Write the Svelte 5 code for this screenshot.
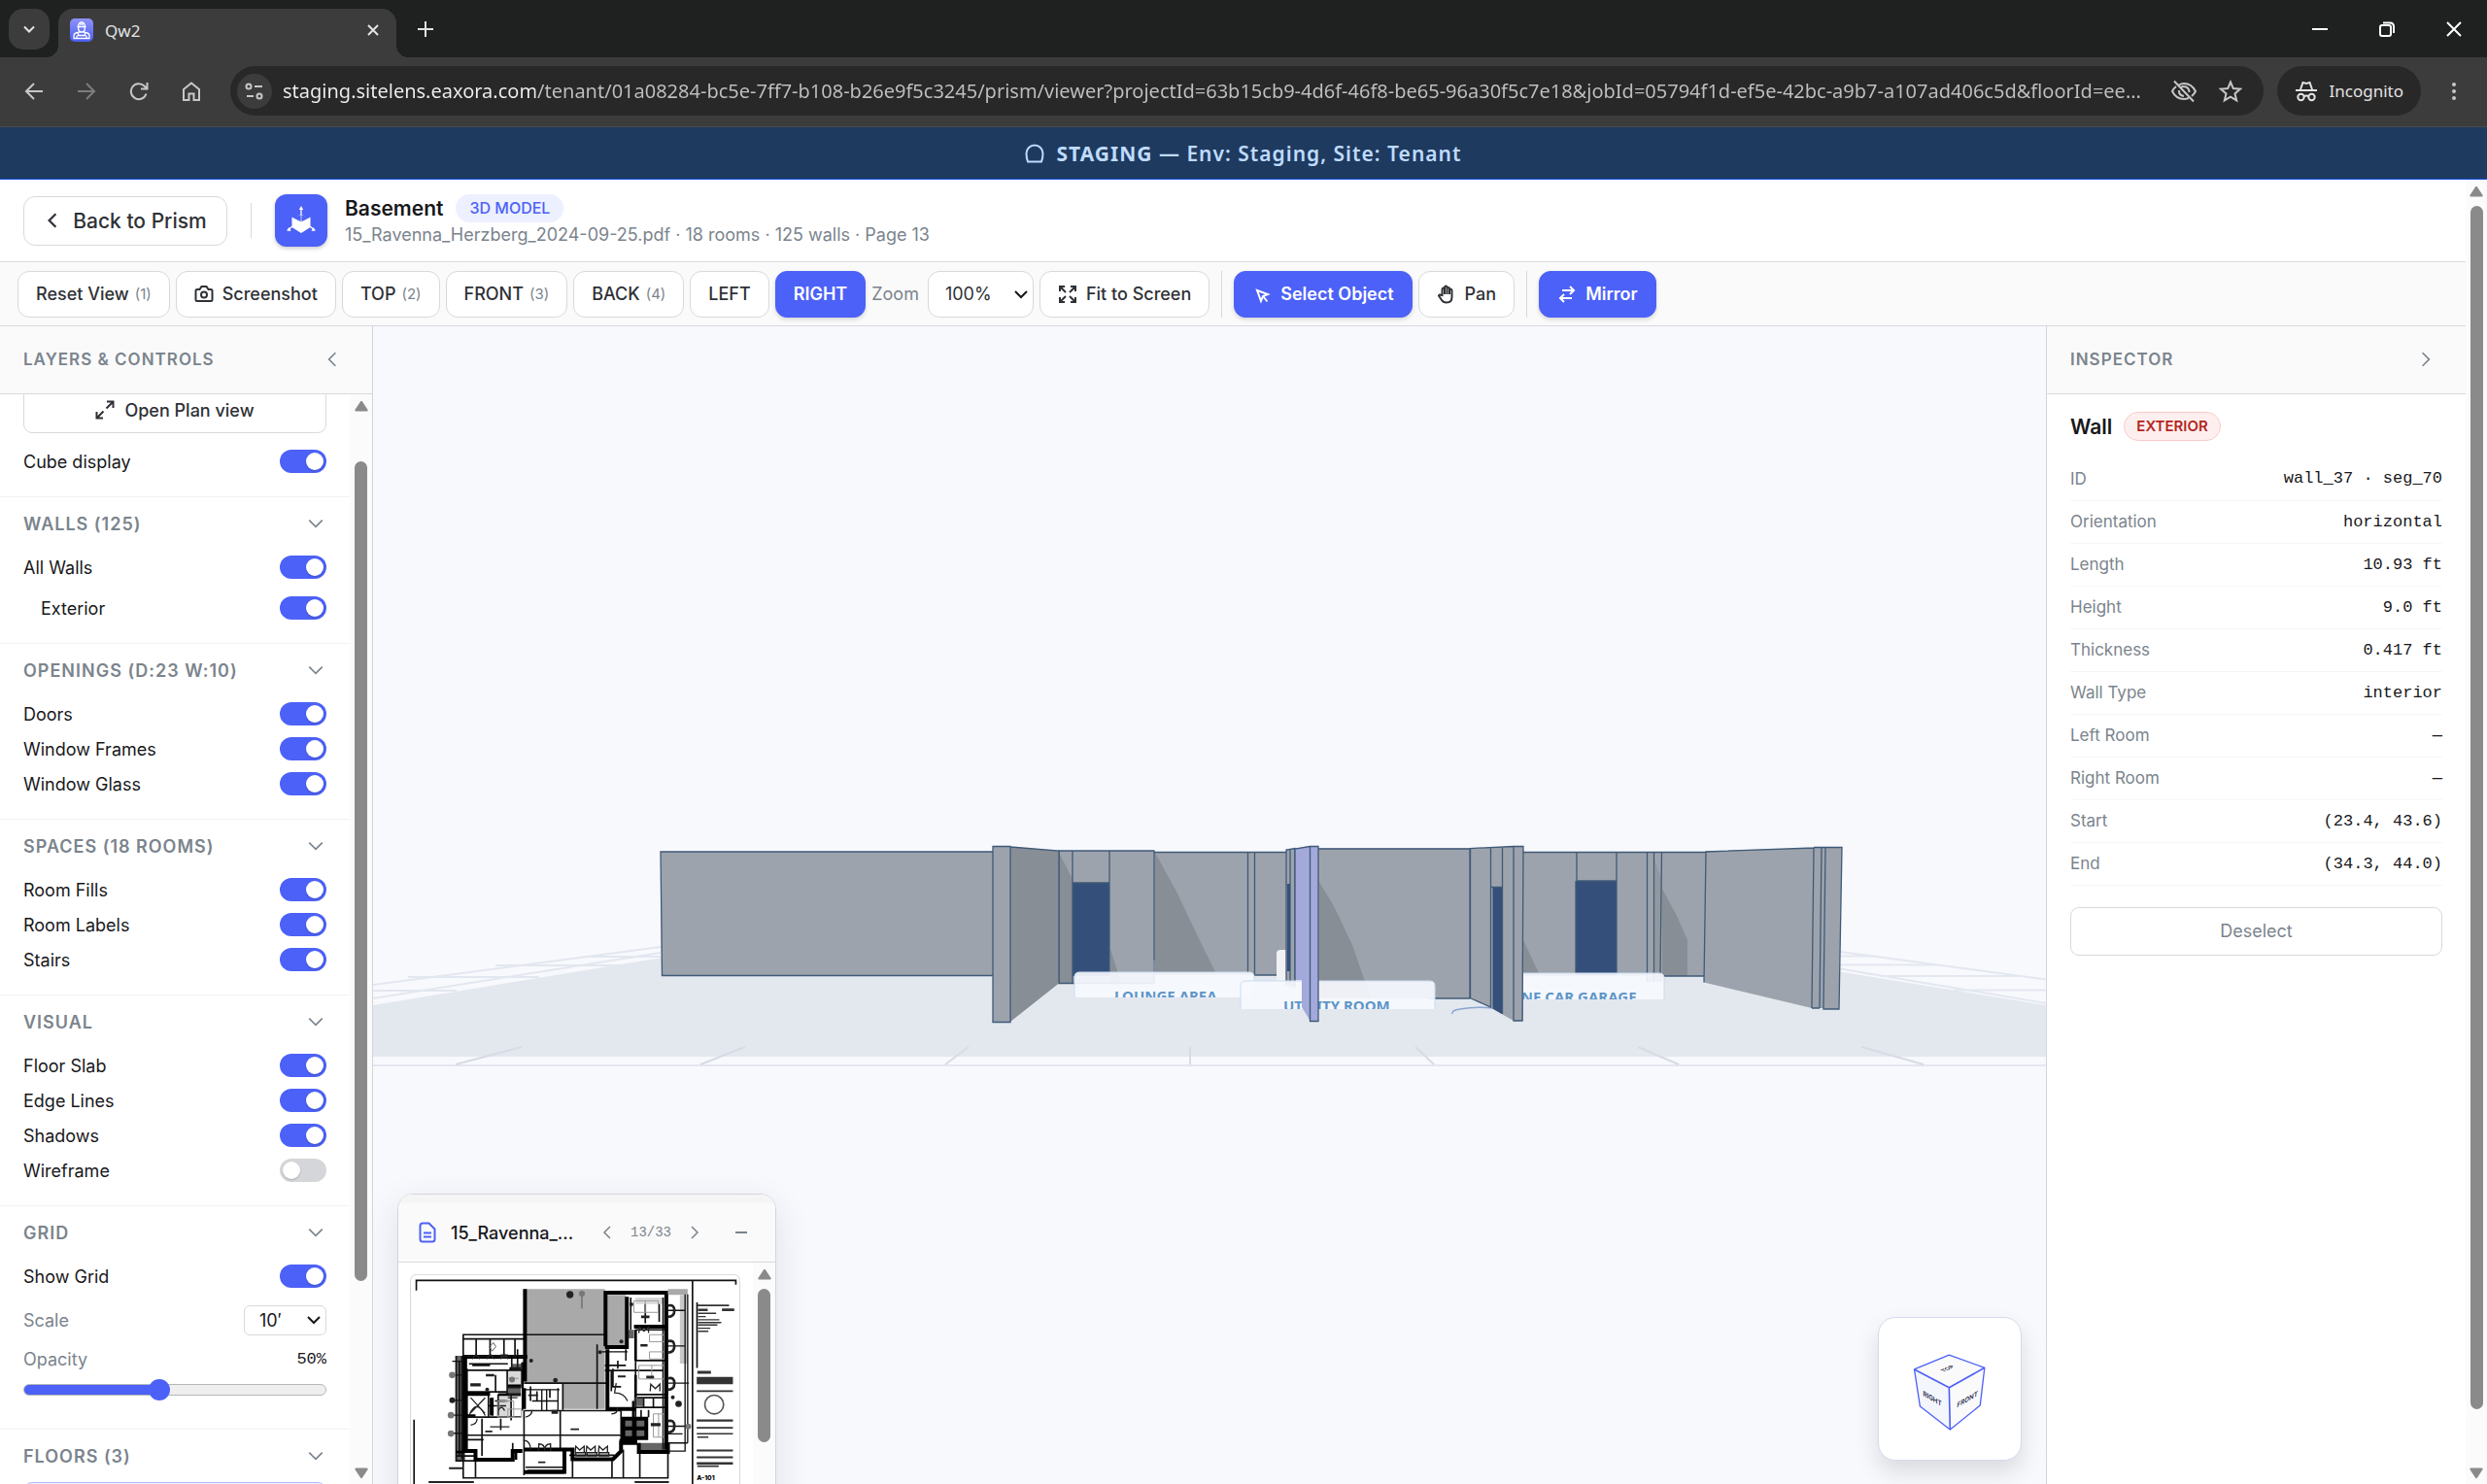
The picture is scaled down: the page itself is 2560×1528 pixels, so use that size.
<script>
	let sections = $state([
		{
			title: 'WALLS (125)',
			rows: [
				{ label: 'All Walls', on: true },
				{ label: 'Exterior', on: true, nested: true }
			]
		},
		{
			title: 'OPENINGS (D:23 W:10)',
			rows: [
				{ label: 'Doors', on: true },
				{ label: 'Window Frames', on: true },
				{ label: 'Window Glass', on: true }
			]
		},
		{
			title: 'SPACES (18 ROOMS)',
			rows: [
				{ label: 'Room Fills', on: true },
				{ label: 'Room Labels', on: true },
				{ label: 'Stairs', on: true }
			]
		},
		{
			title: 'VISUAL',
			rows: [
				{ label: 'Floor Slab', on: true },
				{ label: 'Edge Lines', on: true },
				{ label: 'Shadows', on: true },
				{ label: 'Wireframe', on: false }
			]
		}
	]);

	let cubeDisplay = $state(true);
	let showGrid = $state(true);
	let opacity = $state(50);
	let fill = $derived(((opacity - 10) / 90) * 100);
	let view = $state('RIGHT');
	let url = $state(
		'staging.sitelens.eaxora.com/tenant/01a08284-bc5e-7ff7-b108-b26e9f5c3245/prism/viewer?projectId=63b15cb9-4d6f-46f8-be65-96a30f5c7e18&jobId=05794f1d-ef5e-42bc-a9b7-a107ad406c5d&floorId=ee...'
	);

	const views = [
		{ name: 'TOP', key: '(2)' },
		{ name: 'FRONT', key: '(3)' },
		{ name: 'BACK', key: '(4)' },
		{ name: 'LEFT' },
		{ name: 'RIGHT' }
	];

	const details = [
		['ID', 'wall_37 · seg_70'],
		['Orientation', 'horizontal'],
		['Length', '10.93 ft'],
		['Height', '9.0 ft'],
		['Thickness', '0.417 ft'],
		['Wall Type', 'interior'],
		['Left Room', '—'],
		['Right Room', '—'],
		['Start', '(23.4, 43.6)'],
		['End', '(34.3, 44.0)']
	];
</script>

{#snippet chevron(dir)}
	<svg class="chevron {dir}" viewBox="0 0 16 16" width="18" height="18"><path d="M2 5l6 6 6-6" /></svg>
{/snippet}

{#snippet arrow(dir)}
	<svg class="arrow {dir}" viewBox="0 0 14 12" width="14" height="12"><path d="M6 1.5Q7 .2 8 1.5L13.6 10Q14 11.5 12.5 11.5H1.5Q0 11.5.4 10Z" /></svg>
{/snippet}

<div class="app">
	<header class="tabs">
		<button class="tab-search" aria-label="Search tabs">
			<svg viewBox="0 0 14 14" width="14" height="14"><path d="M2 4.500l5 5 5-5" /></svg>
		</button>
		<div class="tab">
			<svg class="favicon" viewBox="0 0 24 24" width="24" height="24">
				<defs>
					<linearGradient id="fav" x1="0" y1="0" x2="0" y2="1">
						<stop offset="0" stop-color="#8f92f8" />
						<stop offset="1" stop-color="#4b5ff0" />
					</linearGradient>
				</defs>
				<rect width="24" height="24" rx="5" fill="url(#fav)" />
				<path d="M7.500 8.500h9M8.500 8a3.500 4 0 0 1 7 0M11 4v3M13 4v3M8.700 9v1.500a3.300 3.300 0 0 0 6.600 0V9M4 20.500v-2.500q0-3 4-3.500l1.500-.5h5l1.500.5q4 .5 4 3.500v2.500zM8.500 14.500v3h7v-3M7 20.500v-3M17 20.500v-3" fill="none" stroke="#fff" stroke-width="1.300" />
			</svg>
			<span class="tab-title">Qw2</span>
			<button class="bare" aria-label="Close tab">
				<svg viewBox="0 0 14 14" width="14" height="14"><path d="M2 2l10 10M12 2L2 12" /></svg>
			</button>
		</div>
		<button class="bare new-tab" aria-label="New tab">
			<svg viewBox="0 0 16 16" width="16" height="16"><path d="M8 0v16M0 8h16" /></svg>
		</button>
		<div class="window-buttons">
			<button class="bare" aria-label="Minimize"><svg viewBox="0 0 16 16" width="16" height="16"><path d="M0 8h16" /></svg></button>
			<button class="bare" aria-label="Restore">
				<svg viewBox="0 0 16 16" width="16" height="16"><rect x="1" y="4" width="11" height="11" rx="2" /><path d="M4 1.500h7q4 0 4 4V12" /></svg>
			</button>
			<button class="bare" aria-label="Close"><svg viewBox="0 0 16 16" width="16" height="16"><path d="M1 1l14 14M15 1L1 15" /></svg></button>
		</div>
	</header>

	<nav class="browser-bar">
		<div class="nav-icons">
			<button class="bare" aria-label="Back"><svg viewBox="0 0 20 20" width="20" height="20"><path d="M19 10H2M10 2l-8 8 8 8" /></svg></button>
			<button class="bare off" aria-label="Forward"><svg viewBox="0 0 20 20" width="20" height="20"><path d="M1 10h17M10 2l8 8-8 8" /></svg></button>
			<button class="bare" aria-label="Reload"><svg viewBox="0 0 20 20" width="20" height="20"><path d="M17.500 12.500A8 8 0 1 1 15.500 4.500L18 7M18.500 1v6.500H12" /></svg></button>
			<button class="bare" aria-label="Home"><svg viewBox="0 0 20 20" width="20" height="20"><path d="M2 8l8-6.500L18 8v11h-5.500v-6.500h-5V19H2z" /></svg></button>
		</div>
		<div class="url">
			<button class="site-info" aria-label="Site information">
				<svg viewBox="0 0 20 20" width="20" height="20"><circle cx="4" cy="5" r="2.500" /><path d="M10 5h8M2 15h7" /><circle cx="15" cy="15" r="2.500" /></svg>
			</button>
			<input type="text" aria-label="Address" bind:value={url} />
			<button class="bare" aria-label="Third-party cookies blocked">
				<svg viewBox="0 0 28 24" width="28" height="24"><path d="M9 5.500Q11.300 4 14 4q8 0 12 8-1.500 3-4 5M6 7Q3.500 9 2 12q4 8 12 8 2.500 0 5-1M11 8q2-1.500 5-.5 3.500 1.500 3.500 5.500M9 11q-.5 5 5 6M4 1.500l20 21" /></svg>
			</button>
			<button class="bare" aria-label="Bookmark">
				<svg viewBox="0 0 24 24" width="24" height="24"><path d="M12 2.500l2.800 6.600 7.200.6-5.500 4.700 1.700 7-6.200-3.700-6.200 3.700 1.700-7L2 9.700l7.200-.6z" /></svg>
			</button>
		</div>
		<button class="incognito">
			<svg viewBox="0 0 24 22" width="24" height="22"><path d="M6 9l2.500-7 3.500 1 3.500-1L18 9M1 10h22" /><circle cx="6.500" cy="17" r="3.200" /><circle cx="17.500" cy="17" r="3.200" /><path d="M9.700 16q2.300-1 4.600 0" /></svg>
			Incognito
		</button>
		<button class="bare menu" aria-label="Menu"><svg viewBox="0 0 6 20" width="6" height="20"><circle cx="3" cy="3" r="2" /><circle cx="3" cy="10" r="2" /><circle cx="3" cy="17" r="2" /></svg></button>
	</nav>

	<div class="banner">
		<svg viewBox="0 0 20 20" width="20" height="20"><path d="M3 18.500Q1.500 14.500 1.500 10a8.500 8.500 0 0 1 17 0q0 4.500-1.500 8.500z" /></svg>
		<span><b>STAGING</b> — Env: Staging, Site: Tenant</span>
	</div>

	<div class="page">
		<main class="viewer">
			<div class="title-bar">
				<button class="back">{@render chevron('left')}Back to Prism</button>
				<span class="rule"></span>
				<div class="logo">
					<svg viewBox="0 0 30 30" width="30" height="30">
						<path d="M5.500 11.500L15 16.500l9.500-5V22L15 28 5.500 22z" fill="#fff" />
						<path d="M15 2v16M15 9l-9 6M15 9l9 6M6 21l-4 3.500M24 21l4 3.500" fill="none" stroke="#fff" stroke-width="1.300" />
						<path d="M12.800 4L15 0l2.200 4zM0 25.500l4.500.5-2-4zM30 25.500l-4.500.5 2-4z" fill="#fff" />
						<path d="M7 12.500l7.500-3.500v6.500zM23 12.500L15.500 9v6.500z" fill="#4c61f7" />
					</svg>
				</div>
				<div class="heading">
					<div class="heading-top"><h1>Basement</h1><span class="badge">3D MODEL</span></div>
					<p>15_Ravenna_Herzberg_2024-09-25.pdf · 18 rooms · 125 walls · Page 13</p>
				</div>
			</div>

			<div class="toolbar">
				<button class="tool">Reset View <small>(1)</small></button>
				<button class="tool">
					<svg viewBox="0 0 20 20" width="20" height="20"><path d="M1.500 6.500q0-1.500 1.500-1.500h2.500L7.500 2h5l2 3H17q1.500 0 1.500 1.500v9q0 1.500-1.500 1.500H3q-1.500 0-1.500-1.500z" /><circle cx="10" cy="10.500" r="3" /></svg>
					Screenshot
				</button>
				{#each views as v}
					<button class="tool" class:active={view === v.name} onclick={() => (view = v.name)}>
						{v.name}{#if v.key}<small>{v.key}</small>{/if}
					</button>
				{/each}
				<label class="zoom-label" for="zoom">Zoom</label>
				<div class="select zoom">
					<select id="zoom"><option>100%</option></select>
					{@render chevron('down')}
				</div>
				<button class="tool">
					<svg viewBox="0 0 20 20" width="20" height="20"><path d="M2 7V2h5M2 2l6 6M18 7V2h-5M18 2l-6 6M2 13v5h5M2 18l6-6M18 13v5h-5M18 18l-6-6" /></svg>
					Fit to Screen
				</button>
				<span class="rule"></span>
				<button class="tool active">
					<svg viewBox="0 0 20 20" width="20" height="20"><path d="M5 6l11 4-5 2-2 5zM11.500 12.500l4 5" /></svg>
					Select Object
				</button>
				<button class="tool">
					<svg viewBox="0 0 20 20" width="20" height="20"><path d="M5.500 11V5q0-1.500 1.200-1.500T8 5V3q0-1.500 1.200-1.500T10.500 3v1.500q0-1.500 1.300-1.500T13 4.500V6q0-1.300 1.200-1.300T15.500 6v7q0 5.500-5.500 5.500-3.500 0-5-2.500l-3-4.500q.8-1.500 2-.8zM8 5v5M10.500 4v6M13 5v5" /></svg>
					Pan
				</button>
				<span class="rule"></span>
				<button class="tool active">
					<svg viewBox="0 0 20 20" width="20" height="20"><path d="M5 6h12M13 2l4 4-4 4M15 14H3M7 10l-4 4 4 4" /></svg>
					Mirror
				</button>
			</div>

			<div class="workspace">
				<aside class="layers">
					<div class="panel-head">
						<h2>LAYERS &amp; CONTROLS</h2>
						<button class="bare" aria-label="Collapse layers">{@render chevron('left')}</button>
					</div>
					<div class="scroll-area">
						<div class="scroll-content">
							<div class="cube-section">
								<button class="plan-btn">
									<svg viewBox="0 0 20 20" width="20" height="20"><path d="M12 1.500h6.500V8M18 2l-6.500 6.500M8 18.500H1.500V12M2 18l6.500-6.500" /></svg>
									Open Plan view
								</button>
								<label class="row">Cube display<input type="checkbox" class="toggle" bind:checked={cubeDisplay} /></label>
							</div>
							{#each sections as section}
								<section>
									<button class="section-head">{section.title}{@render chevron('down')}</button>
									{#each section.rows as row}
										<label class="row" class:nested={row.nested}>
											{row.label}<input type="checkbox" class="toggle" bind:checked={row.on} />
										</label>
									{/each}
								</section>
							{/each}
							<section>
								<button class="section-head">GRID{@render chevron('down')}</button>
								<label class="row">Show Grid<input type="checkbox" class="toggle" bind:checked={showGrid} /></label>
								<div class="row muted scale-row">
									<label for="scale">Scale</label>
									<div class="select scale">
										<select id="scale"><option>10′</option></select>
										{@render chevron('down')}
									</div>
								</div>
								<div class="row muted"><label for="opacity">Opacity</label><output>{opacity}%</output></div>
								<input id="opacity" type="range" min="10" max="100" bind:value={opacity} style="--fill: {fill}%" />
							</section>
							<section>
								<button class="section-head">FLOORS (3){@render chevron('down')}</button>
								<button class="floor-btn" aria-label="Floor"></button>
							</section>
						</div>
						<div class="scrollbar">{@render arrow('up')}<span class="thumb side-thumb"></span>{@render arrow('down')}</div>
					</div>
				</aside>

				<div class="canvas">
					<svg class="scene" viewBox="384 336 1722 1192" preserveAspectRatio="xMidYMid slice">
						<defs>
							<clipPath id="clip-lounge"><rect x="1106" y="1000" width="185" height="27" /></clipPath>
							<clipPath id="clip-utility"><rect x="1277" y="1009" width="201" height="30" /></clipPath>
							<clipPath id="clip-garage"><rect x="1529" y="1001" width="184" height="28" /></clipPath>
						</defs>
						<path fill="#e3e8ef" d="M384 1035L660 989.500L760 974H1800L1894 1000.500L2106 1035V1088H384z" />
						<g fill="none" stroke="#e3e7ef" stroke-width="2">
							<path d="M384 1097H2106" />
							<path d="M384 1028L680 981M384 1014L680 975M384 1020H470M420 1006H555M510 994H650M600 985H680" />
							<path d="M1894 980L2106 1008.500M1894 997.500L2106 1033M1894 984.500H1930M1894 993.500H1995M1935 1005H2078M2012 1019.500H2106" />
							<path stroke="#d6dbe5" d="M469 1096L537 1078M721 1096L767 1078M973 1096L997 1078M1225 1096V1078M1476 1096L1457 1078M1728 1096L1686 1078M1980 1096L1916 1078" />
						</g>
						<!-- back walls -->
						<g fill="#9da3ac">
							<path d="M680 877H1022V1004.500H681z" />
							<path d="M1090 876H1188V1012.500H1090z" />
							<path d="M1188 877H1324V1004H1188z" />
							<path d="M1357 873.500H1514V1028H1357z" />
							<path d="M1568 877H1756V1005H1568z" />
							<path d="M1695 877H1711V1011H1695z" />
							<path d="M1756 876.500L1867 873L1865 1038L1754 1011.500z" />
							<path d="M1867 873H1879L1877 1038H1865z" />
							<path d="M1879 872.500H1896L1893 1039H1877z" />
						</g>
						<g fill="#888e96">
							<path d="M1090 878L1104 905V1012H1090z" />
							<path d="M1143 977L1154 1012H1143z" />
							<path d="M1189 878L1211 918L1231 960L1252 1003H1189z" />
							<path d="M1358 908L1373 933L1392 973L1411 1028H1358z" />
							<path d="M1568 968L1585 1004H1568z" />
							<path d="M1711 915L1726 943L1737 968V1005H1711z" />
							<path d="M1703 885L1710 905V1010H1703z" fill="#92989f" />
						</g>
						<g fill="#34507a">
							<path d="M1104 909H1142V1005H1104zM1622 907H1664V1004H1622z" />
						</g>
						<path d="M1314 1012V982q0-4 4-4h6v34z" fill="#f0f1f3" />
						<path d="M1187 988q2 0 2 4v10h-2z" fill="#f0f1f3" />
						<path d="M1324 875L1333 873.500V1018L1324 1014z" fill="#9da3ac" />
						<g class="edges">
							<path d="M1022 877H680L681.500 1004.500H1022" />
							<path d="M1090 876H1188V1012.500H1090zM1104 876V1012M1142 876V909H1104M1142 909V1003" />
							<path d="M1188 877.500H1324M1284.500 877V1003M1291.500 877V1004H1314" />
							<path d="M1324 1014V875L1333 873.500V1016M1328 875V1012" />
							<path d="M1357 874H1513V1028H1470" />
							<path d="M1568 877.500H1756M1623 877.500V907H1664V877.500M1622 907V1002M1664 907V1002M1695.500 877V1011M1702.500 877V1011M1710.500 877L1709 1005H1754" />
							<path d="M1754 1011.500L1756 877L1867 873L1865 1038M1875 873L1873 1038M1879 873L1877 1039H1893L1896 872.500H1867M1865 1038H1873" />
						</g>
						<path d="M1325 910h3v90h-3z" fill="#34507a" />
						<!-- room labels, cut by the floor -->
						<g fill="#f6f9fe" fill-opacity="0.920" stroke="#cbdcf0" stroke-width="1">
							<path d="M1106 1027V1006q0-5 5-5h175q5 0 5 5v21" />
							<path d="M1529 1029V1007q0-5 5-5h174q5 0 5 5v22" />
							<path d="M1277 1039V1015q0-5 5-5h190q5 0 5 5v24" />
						</g>
						<g class="room">
							<text x="1147" y="1031" clip-path="url(#clip-lounge)">LOUNGE AREA</text>
							<text x="1554" y="1032" clip-path="url(#clip-garage)">ONE CAR GARAGE</text>
							<text x="1321" y="1041" clip-path="url(#clip-utility)">UTILITY ROOM</text>
						</g>
						<path d="M1495 1044q-1-4 8-5 16-3 34-1" fill="none" stroke="#8ba5d0" stroke-width="1.500" />
						<!-- front walls -->
						<path d="M1040 872L1090 876V1012.500L1040 1052z" fill="#888e96" />
						<path d="M1022 871H1040V1052.500H1022z" fill="#9da3ac" />
						<path d="M1514 873.500L1568 871V1051H1558L1534 1037.500L1514 1028z" fill="#9da3ac" />
						<path d="M1536.500 914H1546V1044L1536.500 1038.500z" fill="#34507a" />
						<path d="M1333 873.500L1348.500 872V1051L1340 1037V1009H1333z" fill="#a3a9da" />
						<path d="M1348.500 871.500H1357V1051.500H1348.500z" fill="#a3a9da" />
						<g class="edges">
							<path d="M1022 871.500H1040V1052.500H1022zM1040 872L1090 876V1012.500" />
							<path d="M1333 1009V874L1348.500 871.500H1357V1051.500H1348.500V871.500" />
							<path d="M1513.500 1028V873.500L1558 871.500H1568L1567 1051H1558V871.500M1534.500 873V1037L1514 1028M1546.500 873V1044M1534.500 913.500H1546.500" />
						</g>
					</svg>

					<div class="plan-card">
						<div class="plan-head">
							<svg class="doc" viewBox="0 0 18 22" width="18" height="22"><path d="M4 1.500h6.500L16.500 7.500V18q0 2.500-2.500 2.500H4Q1.500 20.500 1.500 18V4Q1.500 1.500 4 1.500zM5 11.500h8M5 15.500h8" /></svg>
							<strong>15_Ravenna_...</strong>
							<button class="bare" aria-label="Previous page">{@render chevron('left')}</button>
							<span class="count">13/33</span>
							<button class="bare" aria-label="Next page">{@render chevron('right')}</button>
							<button class="bare minimise" aria-label="Minimise"><svg viewBox="0 0 12 12" width="12" height="12"><path d="M0 6h12" /></svg></button>
						</div>
						<div class="plan-body">
							<svg class="sheet" viewBox="98 308 1020 760" width="340" height="253">
								<rect x="99" y="309" width="1018" height="900" rx="18" fill="#fff" stroke="#d4d6da" stroke-width="3" />
								<g fill="#a9a9a9">
									<path d="M450 354H700V725H570V645H450zM700 372H765V535H700zM895 354H956V372H895z" />
									<path d="M932 372h22v212h-22zM240 560h16v325h-16z" fill="#c9c9c9" />
									<path d="M240 560h28v325h-28zM803 830h90v28h-90zM760 755h64v60h-64z" fill="#666" />
									<path d="M370 680h40v70h-40zM400 605h48v50h-48zM795 380h85v20h-85z" fill="#d9d9d9" />
								</g>
								<g fill="none" stroke="#111" stroke-width="5">
									<path d="M117 358V327H1105V340M971 327V960M985 395V598M110 758V960" />
									<path d="M260 495H700M262 508H450M570 645V728M676 525V725M450 645H708M302 508V560M345 508V560M388 508V560M422 508V560" />
									<path d="M262 495V938H895V858M240 560V888M262 560H460M262 605H450M262 672H400M398 605V680M445 580V730M262 678V745M340 678V750M262 750H440M370 680V745M410 680V760" />
									<path d="M300 858V938M415 830V880M450 730V930M320 755V870M562 730V850M262 806H750M450 730H750M750 730V850M262 820H325M600 880V938M722 880V938M757 850V938M808 860V938" />
									<path d="M700 606H890M795 480V680M795 480H890M795 575H890M795 680H890M710 575V720M765 540V575M725 600V656H750M720 606V670M780 380V480M825 400V460M868 400V455M795 720H890M795 690V830" />
									<path d="M948 370V855M956 370V830M895 420H948M895 530H950M895 645H960M895 778H960M890 830H956M895 855H950M895 802H940" stroke-width="4" />
									<path d="M505 730V665M520 665V730M475 700H555M555 660V730M450 665H560M690 548H770M228 577H262M228 620H262M228 698H262M228 744H262M228 800H262" stroke-width="4" />
									<path d="M250 575V870M258 560V880M274 600V850M280 585H400M290 590H345M412 560V605M430 540V600M240 870H300M240 885H415M455 905H570M460 915H575M590 868H730M700 590H765M740 575V600M880 380V850M886 690H800M820 690V720M850 690V720M362 620V672M378 755V790M352 690V745M360 700H400M340 715H372M470 655V700M490 670V700M530 665V690M812 728V750M835 728V750" />
								</g>
								<g fill="none" stroke="#000" stroke-width="12">
									<path d="M453 354V640M702 360V530M698 365H895M890 370V850M700 533H768V378M268 565V850M262 855H300V882H415V855H445" />
									<path d="M262 678H345M350 690V745M400 655H440M450 660V725M450 850H600V880H725L750 855V830H800M895 830V858H805V830M575 855V925M450 920H575M790 470H885M708 540V725H795M757 755H828V815H757zM757 785H828M792 755V815" />
									<path d="M445 582V660M262 565H460M405 600H440M370 680H440M262 745H300M425 850V882M795 480V575M795 620V690M788 700V830M745 822H800M240 858H262" stroke-width="8" />
								</g>
								<g fill="none" stroke="#222" stroke-width="4">
									<path d="M280 745q22-55 50 0M285 690l44 48M330 690l-46 48M495 855l1-22q18 0 18 20 0-20 18-20v22M608 860l2-20 12 12 14-12v20M642 860l2-20 12 12 14-12v20M680 860l2-20 12 12 14-12v20M840 670l2-22 14 14 14-14v22M805 490l2-18 14 12 14-12v18" />
									<path d="M290 570l12-14 12 14M334 570l12-14 12 14M376 570l12-14 12 14M735 645l-5 30q30 0 40 25M740 720q0 20-20 20M455 750q20-5 20-22M470 850q0-28-22-28M285 775q20-4 20-20" />
									<path d="M610 870h30v-10h-30zM645 870h30v-10h-30zM682 870h30v-10h-30zM370 730q10-20 20 0M400 690h30M372 700h20M375 715h20" />
									<path d="M895 405q20-5 20 15t-20 20M895 515q20-5 20 15t-20 20M895 630q20-5 20 15t-20 20M895 762q20-5 20 15t-20 20" stroke-width="8" />
								</g>
								<g fill="none" stroke="#9a9a9a" stroke-width="3">
									<path d="M790 390h75v36h-75zM825 390v36M838 495h45v22h-45zM838 548h45v22h-45zM805 590h78v42h-78zM845 590v42M368 700h50v50h-50zM400 725h42v26h-42zM850 740h32v72h-32zM866 740v72M400 630h34" />
									<path d="M355 520l8 12-12 14-8-14zM620 366h18M629 360v54" stroke="#555" />
								</g>
								<g fill="#222">
									<circle cx="592" cy="371" r="11" /><circle cx="228" cy="698" r="9" /><circle cx="928" cy="709" r="10" />
									<circle cx="472" cy="575" r="6" /><circle cx="547" cy="636" r="7" /><circle cx="336" cy="665" r="6" /><circle cx="685" cy="549" r="6" /><circle cx="782" cy="401" r="6" /><circle cx="751" cy="516" r="6" /><circle cx="910" cy="689" r="6" />
									<path d="M332 617h26v7h-26zM284 645h32v10h-32zM463 680h30v5h-30zM494 887h22v5h-22zM594 785h26v5h-26zM812 436h26v8h-26zM810 524h22v8h-22zM828 622h24v8h-24zM740 621h24v6h-24zM842 768h30v10h-30zM345 778h60v4h-60zM330 792h22v5h-22zM535 728h20v12h-20zM218 905h44v6h-44zM155 948h140v6H155zM792 948h106v6H792z" />
									<path d="M400 655h40v30h-40zM378 555h22v14h-22zM410 585h36v20h-36zM790 690h30v26h-30zM770 480h20v26h-20z" opacity=".7" />
								</g>
								<g fill="#777"><circle cx="228" cy="620" r="10" /><circle cx="224" cy="744" r="10" /><circle cx="224" cy="801" r="10" /><circle cx="629" cy="368" r="9" /><circle cx="413" cy="634" r="9" /><circle cx="958" cy="779" r="9" /></g>
								<g fill="#333">
									<path d="M986 402h98v5h-98zM988 415h30v7h-30zM1062 414h38v8h-38zM988 427h56v4h-56zM988 437h24v4h-24zM988 447h66v4h-66zM988 455h72v5h-72zM988 463h60v4h-60zM988 473h38v4h-38zM988 482h32v5h-32z" />
									<path d="M986 607h42v9h-42zM984 626h112v22h-112zM984 667h112v5h-112zM984 757h112v7h-112zM984 780h112v6h-112zM984 799h112v5h-112zM984 850h112v6h-112zM984 871h112v6h-112zM984 889h112v8h-112zM986 899h66v5h-66zM986 810h34v4h-34z" />
								</g>
								<circle cx="1038" cy="711" r="29" fill="#fff" stroke="#555" stroke-width="5" />
								<text class="sheet-no" x="984" y="944">A-101</text>
							</svg>
							<div class="scrollbar">{@render arrow('up')}<span class="thumb plan-thumb"></span>{@render arrow('down')}</div>
						</div>
					</div>

					<button class="cube" aria-label="View cube">
						<svg viewBox="98 79 444 444" width="146" height="146">
							<path d="M209 240L318 297L321 429L227 356z" fill="#f4f6fd" />
							<path d="M318 297L429 235L415 353L321 429z" fill="#fafafb" />
							<path d="M209 240L318 195L429 235L318 297z" fill="#fafafb" />
							<g fill="none" stroke="#4c61f7" stroke-width="4" stroke-linejoin="round">
								<path d="M209 240L318 195L429 235L415 353L321 429L227 356z" />
								<path d="M209 240L318 297L429 235M318 297L321 429" stroke-width="5" />
							</g>
							<g class="faces">
								<text transform="matrix(.86 .5 0 1 236 322)">RIGHT</text>
								<text transform="matrix(.86 -.5 -.1 1 342 360)">FRONT</text>
								<text transform="matrix(.8 -.35 .7 .4 300 249)">TOP</text>
							</g>
						</svg>
					</button>
				</div>

				<aside class="inspector">
					<div class="panel-head">
						<h2>INSPECTOR</h2>
						<button class="bare" aria-label="Collapse inspector">{@render chevron('right')}</button>
					</div>
					<div class="inspect-body">
						<div class="inspect-title"><h3>Wall</h3><span class="type">EXTERIOR</span></div>
						<table>
							<tbody>
								{#each details as [name, value]}
									<tr><th scope="row">{name}</th><td>{value}</td></tr>
								{/each}
							</tbody>
						</table>
						<button class="deselect">Deselect</button>
					</div>
				</aside>
			</div>
		</main>
		<div class="scrollbar page-scroll">{@render arrow('up')}<span class="thumb page-thumb"></span>{@render arrow('down')}</div>
	</div>
</div>

<style>
	:global(body) {
		margin: 0;
		overflow: hidden;
	}
	.app {
		height: 100vh;
		display: flex;
		flex-direction: column;
		font-family: Inter, 'Noto Sans', sans-serif;
		font-size: 18px;
		color: #18181b;
		background: #fff;
	}
	.app :global(*) {
		box-sizing: border-box;
	}
	button,
	input,
	select {
		font: inherit;
		color: inherit;
		margin: 0;
	}
	button {
		cursor: pointer;
	}
	h1,
	h2,
	h3,
	p {
		margin: 0;
	}
	svg {
		flex: none;
		display: block;
	}
	.bare {
		background: none;
		border: none;
		padding: 0;
		display: flex;
		align-items: center;
		justify-content: center;
	}
	button svg,
	.doc,
	.banner svg,
	.chevron {
		fill: none;
		stroke: currentColor;
		stroke-width: 2;
	}
	.chevron.left {
		transform: rotate(90deg);
	}
	.chevron.right {
		transform: rotate(-90deg);
	}

	/* browser frame */
	.tabs {
		height: 59px;
		flex: none;
		display: flex;
		align-items: center;
		padding-left: 9px;
		background: #1f2121;
		color: #e3e3e3;
		font-family: 'Noto Sans', sans-serif;
		font-size: 17px;
	}
	.tab-search {
		width: 42px;
		height: 42px;
		padding: 0;
		border: none;
		border-radius: 15px;
		background: #3c3c3c;
		display: flex;
		align-items: center;
		justify-content: center;
	}
	.tab {
		width: 348px;
		height: 50px;
		margin-left: 9px;
		align-self: flex-end;
		padding: 0 17px 6px 12px;
		border-radius: 15px 15px 0 0;
		background: #3c3c3c;
		display: flex;
		align-items: center;
		gap: 12px;
		position: relative;
	}
	.tab::before,
	.tab::after {
		content: '';
		position: absolute;
		bottom: 0;
		width: 12px;
		height: 12px;
	}
	.tab::before {
		left: -12px;
		background: radial-gradient(circle at 0 0, transparent 12px, #3c3c3c 12px);
	}
	.tab::after {
		right: -12px;
		background: radial-gradient(circle at 100% 0, transparent 12px, #3c3c3c 12px);
	}
	.tab-title {
		flex: 1;
	}
	.new-tab {
		margin-left: 22px;
	}
	.window-buttons {
		margin-left: auto;
		display: flex;
		gap: 53px;
		padding-right: 26px;
		color: #fff;
	}
	.browser-bar {
		height: 72px;
		flex: none;
		display: flex;
		align-items: center;
		padding: 0 31px 2px 25px;
		background: #3c3c3c;
		border-bottom: 1px solid #4a4a4a;
		color: #c7c7c7;
	}
	.nav-icons {
		display: flex;
		gap: 34px;
		margin-right: 30px;
	}
	.off {
		color: #7d7d7d;
	}
	.url {
		flex: 1;
		min-width: 0;
		height: 51px;
		display: flex;
		align-items: center;
		gap: 22px;
		padding: 0 22px 0 7px;
		border-radius: 26px;
		background: #282828;
	}
	.site-info {
		width: 36px;
		height: 36px;
		padding: 0;
		border: none;
		border-radius: 18px;
		background: #3c3c3c;
		display: flex;
		align-items: center;
		justify-content: center;
		margin-right: -11px;
	}
	/* the host reads brighter than the path */
	.url input {
		flex: 1;
		min-width: 0;
		padding: 0;
		border: none;
		outline: none;
		font-family: 'Noto Sans', sans-serif;
		font-size: 20px;
		color: #c7c7c7;
		background: linear-gradient(to right, #f0f0f0 260px, #c0c0c0 260px);
		background-clip: text;
		-webkit-text-fill-color: transparent;
	}
	.incognito {
		height: 51px;
		margin-left: 14px;
		padding: 0 18px;
		border: none;
		border-radius: 26px;
		background: #282828;
		color: #e3e3e3;
		font-family: 'Noto Sans', sans-serif;
		font-size: 17px;
		display: flex;
		align-items: center;
		gap: 12px;
	}
	.menu {
		margin-left: 31px;
	}
	.menu svg {
		fill: currentColor;
		stroke: none;
	}
	.banner {
		height: 54px;
		flex: none;
		display: flex;
		align-items: center;
		justify-content: center;
		gap: 12px;
		background: #1e3a5f;
		border-bottom: 1px solid #1d4ed8;
		color: #bfdbfe;
		font-family: 'Noto Sans', sans-serif;
		font-size: 21px;
		font-weight: 600;
		letter-spacing: 1px;
	}
	.banner b {
		font-weight: 700;
	}

	.page {
		flex: 1;
		min-height: 0;
		display: grid;
		grid-template-columns: 1fr 22px;
	}
	.viewer {
		min-width: 0;
		min-height: 0;
		display: flex;
		flex-direction: column;
	}
	.title-bar {
		height: 85px;
		flex: none;
		display: flex;
		align-items: center;
		padding: 0 24px;
		border-bottom: 1px solid #d8d9dc;
	}
	.back {
		height: 51px;
		width: 210px;
		padding: 0;
		border: 1px solid #d8d9dc;
		border-radius: 12px;
		background: #fff;
		font-size: 21px;
		font-weight: 500;
		color: #2f3136;
		display: flex;
		align-items: center;
		justify-content: center;
		gap: 12px;
	}
	.rule {
		width: 1px;
		height: 36px;
		background: #d8d9dc;
		margin: 0 24px;
	}
	.logo {
		width: 54px;
		height: 54px;
		border-radius: 12px;
		background: #4c61f7;
		box-shadow: 0 2px 4px rgba(0, 0, 0, 0.2);
		display: flex;
		align-items: center;
		justify-content: center;
		margin-right: 18px;
	}
	.heading-top {
		display: flex;
		align-items: center;
		gap: 13px;
		height: 29px;
	}
	h1 {
		font-size: 21px;
		font-weight: 600;
	}
	.badge {
		height: 29px;
		line-height: 28px;
		padding: 0 14px;
		border-radius: 15px;
		background: #edf0ff;
		color: #4c61f7;
		font-size: 16px;
		font-weight: 500;
	}
	.heading p {
		font-size: 18px;
		line-height: 26px;
		color: #7b848d;
	}
	.toolbar {
		height: 66px;
		flex: none;
		display: flex;
		align-items: center;
		gap: 6px;
		padding: 0 18px;
		background: #fafafa;
		border-bottom: 1px solid #d8d9dc;
	}
	.toolbar .rule {
		height: 48px;
		margin: 0 6px;
	}
	.tool {
		height: 48px;
		padding: 0 18px;
		border: 1px solid #d8d9dc;
		border-radius: 12px;
		background: #fff;
		color: #2f3136;
		font-weight: 500;
		display: flex;
		align-items: center;
		gap: 9px;
		white-space: nowrap;
	}
	.tool small {
		margin-left: -3px;
		font-size: 15px;
		font-weight: 400;
		color: #7b848d;
	}
	.tool.active {
		background: #4c61f7;
		border-color: #4c61f7;
		color: #fff;
		font-weight: 600;
		box-shadow: 0 2px 4px rgba(0, 0, 0, 0.15);
	}
	.zoom-label {
		color: #7b848d;
		margin-right: 3px;
	}
	.select {
		position: relative;
	}
	.select select {
		appearance: none;
		width: 100%;
		height: 100%;
		border: 1px solid #d8d9dc;
		background: #fff;
	}
	.select .chevron {
		position: absolute;
		right: 5px;
		top: 50%;
		margin-top: -8px;
		width: 16px;
		height: 16px;
		pointer-events: none;
	}
	.zoom {
		width: 109px;
		height: 48px;
	}
	.zoom select {
		padding: 0 17px;
		border-radius: 12px;
		color: #2f3136;
	}
	.scale {
		width: 85px;
		height: 31px;
	}
	.scale select {
		padding: 0 15px;
		border-radius: 6px;
		color: #18181b;
	}
	.scale .chevron {
		color: #18181b;
	}

	.workspace {
		flex: 1;
		min-height: 0;
		display: grid;
		grid-template-columns: 384px 1fr 432px;
	}
	.panel-head {
		height: 70px;
		flex: none;
		display: flex;
		align-items: center;
		justify-content: space-between;
		padding: 0 32px 2px 24px;
		background: #fafafa;
		border-bottom: 1px solid #d8d9dc;
		color: #7b848d;
	}
	h2 {
		font-size: 17px;
		font-weight: 600;
		letter-spacing: 1px;
	}
	.layers {
		min-height: 0;
		display: flex;
		flex-direction: column;
		border-right: 1px solid #d3d5da;
	}
	.scroll-area {
		flex: 1;
		min-height: 0;
		display: grid;
		grid-template-columns: 1fr 23px;
		overflow: hidden;
	}
	.scroll-content {
		min-height: 0;
		overflow: hidden;
	}
	.cube-section {
		padding: 0 24px 18px;
	}
	/* scrolled a little, so its top edge sits under the panel head */
	.plan-btn {
		width: 100%;
		height: 48px;
		margin: -8px 0 11px;
		padding: 0;
		border: 1px solid #d8d9dc;
		border-radius: 9px;
		background: #fff;
		color: #2f3136;
		font-weight: 500;
		display: flex;
		align-items: center;
		justify-content: center;
		gap: 10px;
	}
	section {
		border-top: 1px solid #f1f2f3;
		padding: 9px 24px 18px;
	}
	.section-head {
		width: 100%;
		height: 36px;
		margin-bottom: 9px;
		padding: 0 2px 0 0;
		border: none;
		background: none;
		display: flex;
		align-items: center;
		justify-content: space-between;
		font-weight: 600;
		letter-spacing: 1px;
		color: #7b848d;
	}
	.panel-head .chevron,
	.section-head .chevron,
	.plan-head .chevron {
		stroke-width: 1.500;
	}
	.row {
		height: 36px;
		display: flex;
		align-items: center;
		justify-content: space-between;
	}
	.row.nested {
		margin-top: 6px;
		padding-left: 18px;
	}
	.row.muted {
		color: #7b848d;
	}
	.scale-row {
		margin: 9px 0 4px;
	}
	.toggle {
		appearance: none;
		width: 48px;
		height: 24px;
		padding: 3px;
		border-radius: 12px;
		background: #d5d6d9;
		display: flex;
		cursor: pointer;
	}
	.toggle::before {
		content: '';
		width: 18px;
		height: 18px;
		border-radius: 50%;
		background: #fff;
		box-shadow: 0 1px 2px rgba(0, 0, 0, 0.2);
	}
	.toggle:checked {
		background: #4c61f7;
		justify-content: flex-end;
	}
	output,
	td,
	.count {
		font-family: 'Liberation Mono', monospace;
	}
	output {
		font-size: 17px;
		color: #18181b;
	}
	input[type='range'] {
		appearance: none;
		display: block;
		width: 100%;
		height: 22px;
		margin: 3px 0 11px;
		background: none;
	}
	input[type='range']::-webkit-slider-runnable-track {
		height: 12px;
		border: 1px solid #b5b7ba;
		border-radius: 6px;
		background: linear-gradient(to right, #4c61f7 var(--fill), #efefef var(--fill));
	}
	input[type='range']::-webkit-slider-thumb {
		appearance: none;
		width: 22px;
		height: 22px;
		margin-top: -6px;
		border-radius: 50%;
		background: #4c61f7;
	}
	.floor-btn {
		width: 100%;
		height: 48px;
		border: 1px solid #b4bdfb;
		border-radius: 9px;
		background: #edf0ff;
	}

	.scrollbar {
		min-height: 0;
		display: flex;
		flex-direction: column;
		align-items: center;
		padding: 6px 0 5px;
		background: #fbfbfb;
	}
	.arrow {
		fill: #8a8a8a;
	}
	.arrow.down {
		transform: rotate(180deg);
		margin-top: auto;
	}
	.thumb {
		width: 13px;
		border-radius: 7px;
		background: #8a8a8a;
	}
	.side-thumb {
		height: 76%;
		margin-top: 51px;
	}
	.page-thumb {
		height: 93%;
		margin-top: 9px;
	}
	.plan-thumb {
		height: 158px;
		margin-top: 9px;
	}

	.canvas {
		position: relative;
		min-width: 0;
		min-height: 0;
		overflow: hidden;
		background: #f8f9fd;
	}
	.scene {
		position: absolute;
		inset: 0;
		width: 100%;
		height: 100%;
	}
	.edges {
		fill: none;
		stroke: #3f5a78;
		stroke-width: 1.300;
	}
	.room {
		font-family: 'Noto Sans', sans-serif;
		font-size: 15px;
		font-weight: 700;
		fill: #5e95c8;
	}
	.plan-card {
		position: absolute;
		left: 25px;
		top: 893px;
		width: 390px;
		height: 420px;
		border: 1px solid #d3d5da;
		border-radius: 16px;
		background: #fff;
		overflow: hidden;
		box-shadow: 0 12px 36px rgba(30, 40, 80, 0.12);
		display: flex;
		flex-direction: column;
	}
	.plan-head {
		height: 70px;
		flex: none;
		display: flex;
		align-items: center;
		padding: 0 29px 0 21px;
		border-top: 9px solid #f5f5f6;
		border-bottom: 1px solid #d8d9dc;
		background: #fafafa;
		color: #7b848d;
	}
	.plan-head .chevron {
		width: 16px;
		height: 16px;
	}
	.doc {
		color: #4c61f7;
	}
	.plan-head strong {
		flex: 1;
		margin-left: 15px;
		font-size: 18px;
		font-weight: 500;
		color: #18181b;
	}
	.count {
		font-size: 14px;
		margin: 0 16px;
	}
	.minimise {
		margin-left: 34px;
	}
	.plan-body {
		flex: none;
		height: 228px;
		display: grid;
		grid-template-columns: 1fr 23px;
	}
	.sheet {
		margin: 12px 0 0 12px;
	}
	.sheet-no {
		font-family: Inter, sans-serif;
		font-size: 20px;
		font-weight: 800;
	}
	.cube {
		position: absolute;
		right: 25px;
		bottom: 24px;
		width: 148px;
		height: 148px;
		padding: 0;
		border: 1px solid #d5d9ee;
		border-radius: 18px;
		background: #fff;
		box-shadow: 0 12px 24px rgba(0, 0, 0, 0.12);
	}
	.cube svg {
		stroke: none;
	}
	.faces {
		font-family: Inter, sans-serif;
		font-size: 22px;
		font-weight: 600;
		fill: #20264a;
	}

	.inspector {
		min-height: 0;
		border-left: 1px solid #d3d5da;
		background: #fff;
	}
	.inspect-body {
		padding: 18px 24px;
	}
	.inspect-title {
		height: 30px;
		display: flex;
		align-items: center;
		gap: 12px;
		margin-bottom: 17px;
	}
	h3 {
		font-size: 21px;
		font-weight: 600;
	}
	.type {
		height: 30px;
		line-height: 27px;
		padding: 0 12px;
		border: 1px solid #fbcaca;
		border-radius: 15px;
		background: #feefee;
		color: #b3261e;
		font-size: 15px;
		font-weight: 600;
	}
	table {
		width: 100%;
		border-collapse: collapse;
	}
	tr {
		height: 44px;
		border-bottom: 1px solid #f6f6f7;
	}
	th {
		padding: 0;
		text-align: left;
		font-size: 17px;
		font-weight: 400;
		color: #7b848d;
	}
	td {
		padding: 0;
		text-align: right;
		font-size: 17px;
	}
	.deselect {
		width: 100%;
		height: 50px;
		margin-top: 22px;
		border: 1px solid #d8d9dc;
		border-radius: 9px;
		background: #fff;
		color: #7b848d;
	}
</style>
